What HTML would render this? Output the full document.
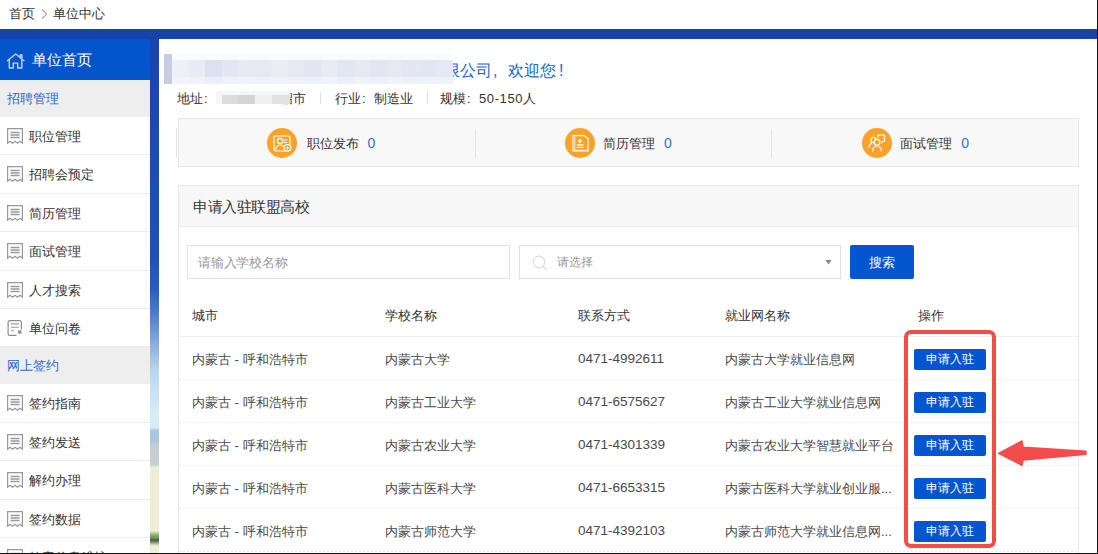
<!DOCTYPE html>
<html><head><meta charset="utf-8">
<style>
*{margin:0;padding:0;box-sizing:border-box}
html,body{width:1098px;height:554px;overflow:hidden;background:#fff}
body{position:relative;font-family:"Liberation Sans",sans-serif;font-size:13px;color:#333}
.a{position:absolute;white-space:nowrap}
#crumb{left:9px;top:5.5px;font-size:13px;line-height:16px;color:#333}
#crumb2{left:53px;top:5.5px;font-size:13px;line-height:16px;color:#333}
#band{left:0;top:29px;width:1098px;height:10px;background:#1743ab}
#strip{left:150px;top:39px;width:9px;height:515px;background:linear-gradient(#1a43ad 0px,#2050b8 211px,#2a5cc0 251px,#5a88cc 282px,#8fb2e0 308px,#b8d4ee 331px,#d8ecf8 374px,#d5eaf8 389px,#a8c8e4 391px,#a8c4e0 401px,#c0ccd8 406px,#c8d0d0 426px,#eeeed8 428px,#eeeed8 492px,#b8cc90 494px,#78a858 497px,#6a9a50 499px,#4a5a48 501px,#7a8a70 503px,#d8dcc0 506px,#eeeed8 507px)}
#side{left:0;top:39px;width:150px;height:515px;background:#fff;overflow:hidden}
#side .hd{position:absolute;left:0;top:0;width:150px;height:41px;background:#0455cb;color:#fff;font-size:15px}
#side .hd span{position:absolute;left:32px;top:12px;line-height:18px}
#side .sec{position:absolute;left:0;width:150px;height:37px;background:#eee;color:#2a68d2;font-size:13px}
#side .sec span{position:absolute;left:7px;top:11px;line-height:16px}
#side .it{position:absolute;left:0;width:150px;height:38.4px;border-bottom:1px solid #ececec;font-size:13px;color:#333}
#side .it span{position:absolute;left:29px;top:12px;line-height:16px}
#side .it svg{position:absolute;left:7px;top:11px}
#content{left:159px;top:39px;width:938px;height:515px;background:#fff}
#mosaic{left:164px;top:54px;width:289px;height:30px;background:#fafbfd}
#mosaic i{position:absolute;top:6px;height:17px}
#mosaic u{position:absolute;top:23px;height:7px}
#welcome{left:444px;top:61px;font-size:16px;line-height:20px;color:#2266cc}
.tx{position:absolute;top:91px;font-size:13px;line-height:16px;color:#333;white-space:nowrap}
.cl{display:inline-block;width:13px;padding-left:1px}
.sep{position:absolute;top:92px;width:1px;height:12px;background:#e0e0e0}
#stats{left:178px;top:118px;width:901px;height:49px;background:#f8f8f8;border:1px solid #e6e6e6}
.st{position:absolute;top:9px;height:30px}
.st svg{position:absolute;left:0;top:0}
.st span{position:absolute;left:39.5px;top:6.5px;line-height:16px;font-size:13px;color:#333}
.st b{font-weight:normal;color:#2f72da;margin-left:9px;font-size:14px}
.vd{position:absolute;top:10px;width:1px;height:29px;background:#e2e2e2}
#card{left:178px;top:185px;width:901px;height:380px;border:1px solid #e6e6e6;background:#fff}
#card .chd{position:absolute;left:0;top:0;width:899px;height:41px;background:#f7f7f7;border-bottom:1px solid #ececec}
#card .chd span{position:absolute;left:14px;top:12px;letter-spacing:-0.5px;font-size:15px;line-height:17px;color:#333}
.inp{position:absolute;height:34px;border:1px solid #e2e2e2;background:#fff;font-size:13px;color:#aaa}
#sbtn{left:850px;top:245px;width:64px;height:34px;background:#0455cf;border-radius:2px;color:#fff;font-size:13px;letter-spacing:0.5px;text-indent:0.5px;line-height:34px;padding-top:1px;text-align:center}
.th{position:absolute;top:308px;font-size:13px;line-height:16px;color:#333}
#thline{left:178px;top:336px;width:900px;height:1px;background:#eeeeee}
.row{position:absolute;left:0;width:1098px;height:43px;}
.row::after{content:"";position:absolute;left:179px;top:42px;width:899px;height:1px;background:repeating-linear-gradient(90deg,#e8e8e8 0 2px,transparent 2px 4px)}
.row span{position:absolute;top:14.5px;font-size:13px;line-height:16px;color:#4a4a4a}
.row span.dg{font-size:13.5px;top:14px}
.row .btn{position:absolute;left:914px;top:12px;width:71.5px;height:21px;background:#0455cf;border-radius:2px;color:#fff;font-size:12px;line-height:21px;text-align:center}
#redbox{left:904px;top:330px;width:92px;height:218px;border:4px solid #f44b4b;border-radius:7px}
#rline{left:1097px;top:0;width:1px;height:554px;background:#111}
#bline{left:0;top:553px;width:1098px;height:1px;background:#111}
</style></head>
<body>
<div class="a" id="crumb">首页</div><svg class="a" style="left:41px;top:8px" width="7" height="11" viewBox="0 0 7 11"><path d="M1 1.5 L5.8 6 L1 10.5" fill="none" stroke="#777" stroke-width="1"/></svg><div class="a" id="crumb2">单位中心</div>
<div class="a" id="band"></div>
<div class="a" id="strip"></div>
<div class="a" id="side">
<div class="hd"><svg style="position:absolute;left:6px;top:13.5px" width="20" height="17" viewBox="0 0 20 17"><path d="M1 8 L9.7 1 L18.4 8 M3.3 6.3 V15 H7.3 V10.1 H11.7 V15 H15.8 V6.3" fill="none" stroke="#c4d6f3" stroke-width="1.4" stroke-linejoin="round"/><path d="M13.9 3.4 V1.6 H16.2 V5.2 Z" fill="#a8c2ee" stroke="#c4d6f3" stroke-width="0.8"/></svg><span>单位首页</span></div>
<div class="sec" style="top:41px"><span>招聘管理</span></div><div class="it" style="top:78.0px"><svg width="16" height="16" viewBox="0 0 16 16"><path d="M0.6 15.2 V0.6 H15.4 V15.2 L13 13.2 L10.5 15.2 L8 13.2 L5.5 15.2 L3 13.2 Z" fill="none" stroke="#999" stroke-width="1.25" stroke-linejoin="miter"/><path d="M3.5 4.6 H12.6 M3.5 7.1 H12.6 M3.5 9.6 H12.6" stroke="#9a9a9a" stroke-width="1.5"/></svg><span>职位管理</span></div><div class="it" style="top:116.4px"><svg width="16" height="16" viewBox="0 0 16 16"><path d="M0.6 15.2 V0.6 H15.4 V15.2 L13 13.2 L10.5 15.2 L8 13.2 L5.5 15.2 L3 13.2 Z" fill="none" stroke="#999" stroke-width="1.25" stroke-linejoin="miter"/><path d="M3.5 4.6 H12.6 M3.5 7.1 H12.6 M3.5 9.6 H12.6" stroke="#9a9a9a" stroke-width="1.5"/></svg><span>招聘会预定</span></div><div class="it" style="top:154.8px"><svg width="16" height="16" viewBox="0 0 16 16"><path d="M0.6 15.2 V0.6 H15.4 V15.2 L13 13.2 L10.5 15.2 L8 13.2 L5.5 15.2 L3 13.2 Z" fill="none" stroke="#999" stroke-width="1.25" stroke-linejoin="miter"/><path d="M3.5 4.6 H12.6 M3.5 7.1 H12.6 M3.5 9.6 H12.6" stroke="#9a9a9a" stroke-width="1.5"/></svg><span>简历管理</span></div><div class="it" style="top:193.2px"><svg width="16" height="16" viewBox="0 0 16 16"><path d="M0.6 15.2 V0.6 H15.4 V15.2 L13 13.2 L10.5 15.2 L8 13.2 L5.5 15.2 L3 13.2 Z" fill="none" stroke="#999" stroke-width="1.25" stroke-linejoin="miter"/><path d="M3.5 4.6 H12.6 M3.5 7.1 H12.6 M3.5 9.6 H12.6" stroke="#9a9a9a" stroke-width="1.5"/></svg><span>面试管理</span></div><div class="it" style="top:231.6px"><svg width="16" height="16" viewBox="0 0 16 16"><path d="M0.6 15.2 V0.6 H15.4 V15.2 L13 13.2 L10.5 15.2 L8 13.2 L5.5 15.2 L3 13.2 Z" fill="none" stroke="#999" stroke-width="1.25" stroke-linejoin="miter"/><path d="M3.5 4.6 H12.6 M3.5 7.1 H12.6 M3.5 9.6 H12.6" stroke="#9a9a9a" stroke-width="1.5"/></svg><span>人才搜索</span></div><div class="it" style="top:270.0px"><svg width="16" height="16" viewBox="0 0 16 16"><path d="M9.5 15.4 H3 Q1.1 15.4 1.1 13.5 V2.5 Q1.1 0.6 3 0.6 H12.6 Q14.4 0.6 14.4 2.5 V9" fill="none" stroke="#8a8a8a" stroke-width="1.2"/><path d="M4 3.9 H12 M4 7.3 H12 M4 10.7 H7" stroke="#9a9a9a" stroke-width="1.1"/><rect x="11" y="10.2" width="3.6" height="3.6" fill="#9a9a9a"/></svg><span>单位问卷</span></div><div class="sec" style="top:308.4px"><span>网上签约</span></div><div class="it" style="top:345.4px"><svg width="16" height="16" viewBox="0 0 16 16"><path d="M0.6 15.2 V0.6 H15.4 V15.2 L13 13.2 L10.5 15.2 L8 13.2 L5.5 15.2 L3 13.2 Z" fill="none" stroke="#999" stroke-width="1.25" stroke-linejoin="miter"/><path d="M3.5 4.6 H12.6 M3.5 7.1 H12.6 M3.5 9.6 H12.6" stroke="#9a9a9a" stroke-width="1.5"/></svg><span>签约指南</span></div><div class="it" style="top:383.8px"><svg width="16" height="16" viewBox="0 0 16 16"><path d="M0.6 15.2 V0.6 H15.4 V15.2 L13 13.2 L10.5 15.2 L8 13.2 L5.5 15.2 L3 13.2 Z" fill="none" stroke="#999" stroke-width="1.25" stroke-linejoin="miter"/><path d="M3.5 4.6 H12.6 M3.5 7.1 H12.6 M3.5 9.6 H12.6" stroke="#9a9a9a" stroke-width="1.5"/></svg><span>签约发送</span></div><div class="it" style="top:422.2px"><svg width="16" height="16" viewBox="0 0 16 16"><path d="M0.6 15.2 V0.6 H15.4 V15.2 L13 13.2 L10.5 15.2 L8 13.2 L5.5 15.2 L3 13.2 Z" fill="none" stroke="#999" stroke-width="1.25" stroke-linejoin="miter"/><path d="M3.5 4.6 H12.6 M3.5 7.1 H12.6 M3.5 9.6 H12.6" stroke="#9a9a9a" stroke-width="1.5"/></svg><span>解约办理</span></div><div class="it" style="top:460.6px"><svg width="16" height="16" viewBox="0 0 16 16"><path d="M0.6 15.2 V0.6 H15.4 V15.2 L13 13.2 L10.5 15.2 L8 13.2 L5.5 15.2 L3 13.2 Z" fill="none" stroke="#999" stroke-width="1.25" stroke-linejoin="miter"/><path d="M3.5 4.6 H12.6 M3.5 7.1 H12.6 M3.5 9.6 H12.6" stroke="#9a9a9a" stroke-width="1.5"/></svg><span>签约数据</span></div><div class="it" style="top:499.0px"><svg width="16" height="16" viewBox="0 0 16 16"><path d="M0.6 15.2 V0.6 H15.4 V15.2 L13 13.2 L10.5 15.2 L8 13.2 L5.5 15.2 L3 13.2 Z" fill="none" stroke="#999" stroke-width="1.25" stroke-linejoin="miter"/><path d="M3.5 4.6 H12.6 M3.5 7.1 H12.6 M3.5 9.6 H12.6" stroke="#9a9a9a" stroke-width="1.5"/></svg><span>签章信息维护</span></div>
</div>
<div class="a" id="content"></div>
<div class="a" id="welcome">限公司<span style="display:inline-block;width:16px;padding-left:1px">,</span>欢迎您<span style="margin-left:3px">!</span></div>
<div class="a" id="mosaic"><i style="left:0;top:0;width:8px;height:30px;background:#c8cbe1"></i><i style="left:8.0px;width:16.5px;background:#edf0f8"></i><u style="left:8.0px;width:16.5px;background:#f3f4f9"></u><i style="left:24.5px;width:16.5px;background:#e9ecf6"></i><u style="left:24.5px;width:16.5px;background:#f1f2f8"></u><i style="left:41.0px;width:16.5px;background:#dce0ef"></i><u style="left:41.0px;width:16.5px;background:#eceef6"></u><i style="left:57.5px;width:16.5px;background:#e4e7f3"></i><u style="left:57.5px;width:16.5px;background:#eff1f7"></u><i style="left:74.0px;width:16.5px;background:#e7eaf5"></i><u style="left:74.0px;width:16.5px;background:#f0f2f8"></u><i style="left:90.5px;width:16.5px;background:#e6e9f4"></i><u style="left:90.5px;width:16.5px;background:#eff1f7"></u><i style="left:107.0px;width:16.5px;background:#eaedf6"></i><u style="left:107.0px;width:16.5px;background:#f2f3f8"></u><i style="left:123.5px;width:16.5px;background:#e6e9f4"></i><u style="left:123.5px;width:16.5px;background:#eff1f7"></u><i style="left:140.0px;width:16.5px;background:#e4e7f3"></i><u style="left:140.0px;width:16.5px;background:#eef0f7"></u><i style="left:156.5px;width:16.5px;background:#e8ebf5"></i><u style="left:156.5px;width:16.5px;background:#f1f2f8"></u><i style="left:173.0px;width:16.5px;background:#e2e5f2"></i><u style="left:173.0px;width:16.5px;background:#eceef6"></u><i style="left:189.5px;width:16.5px;background:#e6e9f4"></i><u style="left:189.5px;width:16.5px;background:#f0f2f8"></u><i style="left:206.0px;width:16.5px;background:#e3e6f2"></i><u style="left:206.0px;width:16.5px;background:#eef0f7"></u><i style="left:222.5px;width:16.5px;background:#e6e9f4"></i><u style="left:222.5px;width:16.5px;background:#f1f2f8"></u><i style="left:239.0px;width:16.5px;background:#e4e7f3"></i><u style="left:239.0px;width:16.5px;background:#eef0f7"></u><i style="left:255.5px;width:16.5px;background:#e2e5f2"></i><u style="left:255.5px;width:16.5px;background:#eff1f7"></u><i style="left:272.0px;width:16.5px;background:#e6e9f4"></i><u style="left:272.0px;width:16.5px;background:#f0f2f8"></u></div>
<div class="tx" style="left:177px">地址<span class="cl">:</span></div>
<div class="tx" style="left:280px">绍市</div>
<div class="a" style="left:216px;top:91px;width:74px;height:13px;background:#f6f6f6;overflow:hidden"><i style="position:absolute;left:6px;top:4px;width:16px;height:9px;background:#dcdcdc"></i><i style="position:absolute;left:22px;top:4px;width:17px;height:9px;background:#d5d5d5"></i><i style="position:absolute;left:39px;top:4px;width:17px;height:9px;background:#f0f0f0"></i><i style="position:absolute;left:56px;top:4px;width:18px;height:9px;background:#e2e2e2"></i></div>
<div class="sep" style="left:320px"></div>
<div class="tx" style="left:335px">行业<span class="cl">:</span>制造业</div>
<div class="sep" style="left:427px"></div>
<div class="tx" style="left:440px">规模<span class="cl">:</span><span style="letter-spacing:0.6px">50-150</span>人</div>
<div class="a" id="stats">
<div class="st" style="left:88px"><svg width="30" height="30" viewBox="0 0 30 30"><circle cx="15" cy="15" r="15" fill="#fca227"/><rect x="7" y="8" width="16" height="15" rx="1.5" fill="none" stroke="#fff" stroke-width="1.2"/><circle cx="13" cy="13" r="2.6" fill="none" stroke="#fff" stroke-width="1.2"/><path d="M8.5 22.5 Q9 17 13 17 Q16 17 17 19" fill="none" stroke="#fff" stroke-width="1.2"/><path d="M16.5 12 H20.5 M16.5 14.5 H20" stroke="#fff" stroke-width="1.1"/><circle cx="20.5" cy="19.8" r="3.3" fill="#fca227" stroke="#fff" stroke-width="1.1"/><path d="M18.8 19.8 H22.2 M20.5 18.1 V21.5" stroke="#fff" stroke-width="1"/></svg><span>职位发布<b>0</b></span></div>
<div class="vd" style="left:296px"></div>
<div class="st" style="left:386px"><svg width="30" height="30" viewBox="0 0 30 30"><circle cx="15" cy="15" r="15" fill="#fca227"/><path d="M7.9 7.6 H18.8 L23.1 10.6 V22.9 H7.9 Z" fill="none" stroke="#fff" stroke-width="1.1"/><path d="M9.8 8 V22.3 H22.6" fill="none" stroke="#fff" stroke-width="0.9" opacity="0.9"/><ellipse cx="14.9" cy="13" rx="1.7" ry="2.1" fill="#fff"/><path d="M11.7 16.9 H18.6 M11.7 19.4 H18.6" stroke="#fff" stroke-width="1.2"/></svg><span style="left:38px">简历管理<b>0</b></span></div>
<div class="vd" style="left:592px"></div>
<div class="st" style="left:683px"><svg width="30" height="30" viewBox="0 0 30 30"><circle cx="15" cy="15" r="15" fill="#fca227"/><circle cx="11.5" cy="12" r="2.6" fill="none" stroke="#fff" stroke-width="1.2"/><path d="M6.8 19.8 Q7.5 15.5 10 15.3" fill="none" stroke="#fff" stroke-width="1.2"/><circle cx="15" cy="14.2" r="2.8" fill="#fca227" stroke="#fff" stroke-width="1.2"/><path d="M10.5 23.5 Q11 18 15 18 Q19 18 19.5 23.5" fill="none" stroke="#fff" stroke-width="1.2"/><path d="M16 9.5 V7.2 H22.5 V13.5 H20.5 L19 15" fill="none" stroke="#fff" stroke-width="1.2"/></svg><span style="left:38.2px">面试管理<b>0</b></span></div>
</div>
<div class="a" style="left:176px;top:128px;width:1px;height:30px;background:#e2e2e2"></div>
<div class="a" id="card"><div class="chd"><span>申请入驻联盟高校</span></div></div>
<div class="a inp" style="left:187px;top:245px;width:323px"><span style="position:absolute;left:10px;top:8.5px;line-height:16px;color:#9a9a9a;letter-spacing:-0.2px">请输入学校名称</span></div>
<div class="a inp" style="left:519px;top:245px;width:322px"><svg style="position:absolute;left:12px;top:9px" width="16" height="16" viewBox="0 0 16 16"><circle cx="7" cy="7" r="5.8" fill="none" stroke="#ddd" stroke-width="1.2"/><path d="M11.2 11.2 L15 15" stroke="#ddd" stroke-width="1.3"/></svg><span style="position:absolute;left:37px;top:9px;font-size:12px;line-height:15px;color:#999">请选择</span><svg style="position:absolute;left:305px;top:14px" width="7" height="5" viewBox="0 0 7 5"><path d="M0.3 0 H6.7 L3.5 4.5 Z" fill="#888"/></svg></div>
<div class="a" id="sbtn">搜索</div>
<div class="th" style="left:192px">城市</div>
<div class="th" style="left:385px">学校名称</div>
<div class="th" style="left:578px">联系方式</div>
<div class="th" style="left:725px">就业网名称</div>
<div class="th" style="left:918px">操作</div>
<div class="a" id="thline"></div>
<div class="row" style="top:337px"><span style="left:192px">内蒙古 - 呼和浩特市</span><span style="left:385px">内蒙古大学</span><span class="dg" style="left:578px">0471-4992611</span><span style="left:725px">内蒙古大学就业信息网</span><div class="btn">申请入驻</div></div><div class="row" style="top:380px"><span style="left:192px">内蒙古 - 呼和浩特市</span><span style="left:385px">内蒙古工业大学</span><span class="dg" style="left:578px">0471-6575627</span><span style="left:725px">内蒙古工业大学就业信息网</span><div class="btn">申请入驻</div></div><div class="row" style="top:423px"><span style="left:192px">内蒙古 - 呼和浩特市</span><span style="left:385px">内蒙古农业大学</span><span class="dg" style="left:578px">0471-4301339</span><span style="left:725px">内蒙古农业大学智慧就业平台</span><div class="btn">申请入驻</div></div><div class="row" style="top:466px"><span style="left:192px">内蒙古 - 呼和浩特市</span><span style="left:385px">内蒙古医科大学</span><span class="dg" style="left:578px">0471-6653315</span><span style="left:725px">内蒙古医科大学就业创业服...</span><div class="btn">申请入驻</div></div><div class="row" style="top:509px"><span style="left:192px">内蒙古 - 呼和浩特市</span><span style="left:385px">内蒙古师范大学</span><span class="dg" style="left:578px">0471-4392103</span><span style="left:725px">内蒙古师范大学就业信息网...</span><div class="btn">申请入驻</div></div>
<div class="a" id="redbox"></div>
<svg class="a" style="left:990px;top:435px" width="100" height="36" viewBox="0 0 100 36"><path d="M8.6 18.4 L32 5.9 L33.2 12.2 L96 16.3 L96 19.2 L33.2 25 L32 30.3 Z" fill="#f44b4b" stroke="#f44b4b" stroke-width="1.4" stroke-linejoin="round"/></svg>
<div class="a" id="rline"></div>
<div class="a" id="bline"></div>
</body></html>
